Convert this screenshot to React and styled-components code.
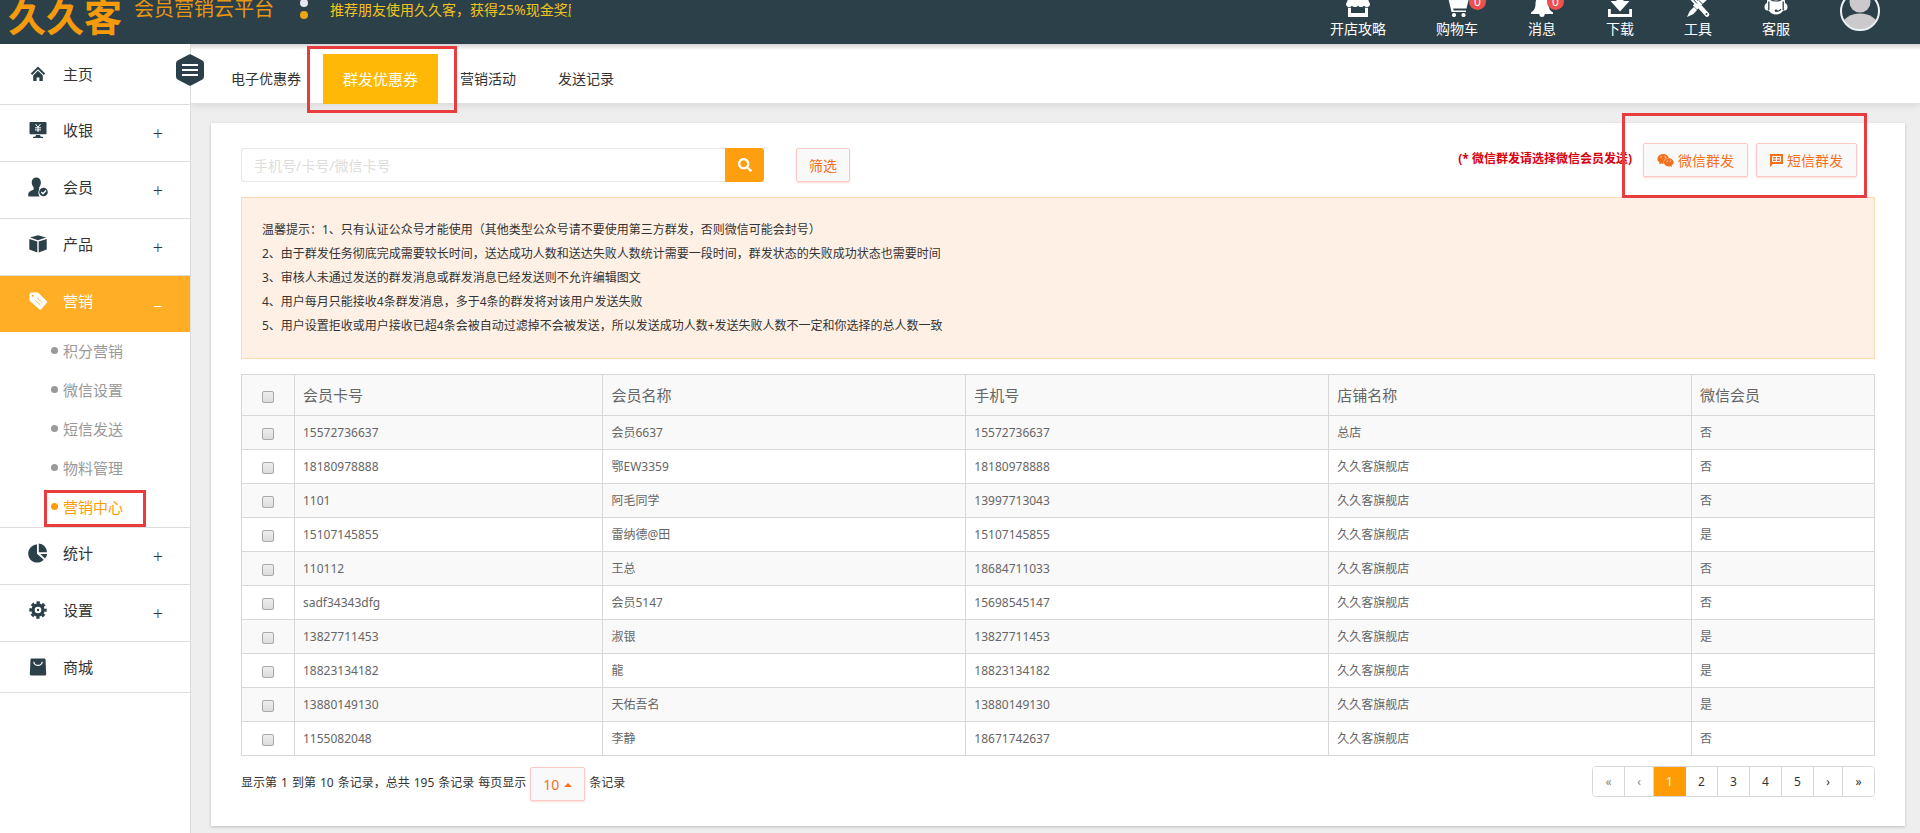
import React from "react";
import styled, { createGlobalStyle } from "styled-components";
import { FaSearch, FaWeixin } from "react-icons/fa";

const GlobalStyle = createGlobalStyle`
  * { box-sizing: border-box; }
  body {
    margin: 0;
    background: #eee;
    color: #333;
    font-family: "Noto Sans", "Noto Sans CJK SC", sans-serif;
    font-size: 12px;
    line-height: 20px;
  }
  button, input, select { font-family: inherit; }
  a { color: inherit; text-decoration: none; }
  ul { list-style: none; margin: 0; padding: 0; }
`;

const navy = "#2c404a";
const orange = "#ff9b05";
const marker = "#e83c3e";

/* ---------- header ---------- */

const Header = styled.header`
  position: relative;
  z-index: 1;
  display: flex;
  align-items: flex-end;
  height: 44px;
  padding-right: 40px;
  overflow: hidden;
  background: ${navy};
  color: #fff;
`;

const Logo = styled.a`
  width: 134px;
  padding-left: 8px;
  color: #f59b0b;
  font-size: 38px;
  font-weight: 700;
  line-height: 56px;
  white-space: nowrap;
`;

const Slogan = styled.div`
  width: 166px;
  height: 44px;
  color: #e8960f;
  font-size: 20px;
  line-height: 18px;
  white-space: nowrap;
`;

const PromoDots = styled.div`
  display: flex;
  flex-direction: column;
  gap: 4px;
  width: 30px;
  height: 45px;
`;

const PromoDot = styled.i`
  width: 8px;
  height: 8px;
  border-radius: 50%;
  background: ${(p) => (p.$active ? "#eda512" : "#e6e6f0")};
`;

const Promo = styled.a`
  width: 241px;
  height: 44px;
  overflow: hidden;
  color: #f0c320;
  font-size: 14px;
  white-space: nowrap;
`;

const Shortcuts = styled.nav`
  display: flex;
  align-items: flex-end;
  gap: 50px;
  margin-left: auto;
  padding-bottom: 5px;
`;

const Shortcut = styled.a`
  position: relative;
  display: flex;
  flex-direction: column;
  align-items: center;
  gap: 2px;
  font-size: 14px;
  white-space: nowrap;
`;

const Badge = styled.span`
  position: absolute;
  top: 0;
  right: -8px;
  width: 17px;
  height: 17px;
  border-radius: 50%;
  background: #ee4f4f;
  font-size: 12px;
  line-height: 17px;
  text-align: center;
`;

const Avatar = styled.a`
  display: block;
  height: 40px;
  margin-bottom: 8px;
`;

/* ---------- sidebar ---------- */

const Shell = styled.div`
  display: flex;
  min-height: calc(100vh - 44px);
`;

const Sidebar = styled.aside`
  position: relative;
  z-index: 2;
  flex: none;
  width: 191px;
  border-right: 1px solid #ddd;
  background: #fff;
`;

const Toggle = styled.button`
  position: absolute;
  top: 10px;
  right: -14px;
  width: 28px;
  height: 32px;
  padding: 0;
  border: 0;
  background: none;
`;

const MenuLink = styled.a`
  display: flex;
  align-items: center;
  height: ${(p) => p.$height || 57}px;
  padding: 0 26px ${(p) => (p.$centered ? 0 : 6)}px 28px;
  border-bottom: 1px solid ${(p) => (p.$active ? "#ffae26" : "#ddd")};
  background: ${(p) => (p.$active ? "#ffae26" : "#fff")};
  color: ${(p) => (p.$active ? "#fff" : "#333")};
  font-size: 15px;

  svg {
    margin-right: 15px;
    color: ${(p) => (p.$active ? "#fff" : navy)};
  }
`;

const Sign = styled.span`
  width: 12px;
  margin: 6px 0 0 auto;
  font-size: 18px;
  font-weight: 300;
  text-align: center;
`;

const SubMenu = styled.ul`
  border-bottom: 1px solid #ddd;
`;

const SubLink = styled.a`
  position: relative;
  display: flex;
  align-items: center;
  gap: 5px;
  height: 39px;
  padding: 0 0 2px 51px;
  color: ${(p) => (p.$active ? orange : "#999")};
  font-size: 15px;

  &::before {
    content: "";
    width: 7px;
    height: 7px;
    border-radius: 50%;
    background: currentColor;
  }
`;

const Marker = styled.span`
  position: absolute;
  inset: ${(p) => p.$inset};
  border: 3px solid ${marker};
  pointer-events: none;
`;

/* ---------- content ---------- */

const Content = styled.div`
  flex: 1;
  min-width: 0;
`;

const TabBar = styled.nav`
  display: flex;
  gap: 2px;
  height: 59px;
  padding: 10px 20px 0;
  background: linear-gradient(#d4d4d4, #fff 6px);
  box-shadow: 0 2px 8px rgba(0, 0, 0, 0.1);
`;

const Tab = styled.a`
  position: relative;
  height: 50px;
  padding: 0 20px;
  background: ${(p) => (p.$active ? "#ffb805" : "transparent")};
  color: ${(p) => (p.$active ? "#fff" : "#333")};
  font-size: ${(p) => (p.$active ? 15 : 14)}px;
  line-height: 50px;
  white-space: nowrap;
`;

const Card = styled.main`
  margin: 20px 15px 6px 20px;
  padding: 20px 30px 25px;
  background: #fff;
  box-shadow: 0 1px 3px rgba(0, 0, 0, 0.2);
`;

const Toolbar = styled.div`
  display: flex;
  justify-content: space-between;
  height: 39px;
  margin-bottom: 15px;
`;

const SearchForm = styled.form`
  display: flex;
  align-self: flex-end;
  height: 34px;
`;

const SearchInput = styled.input`
  width: 484px;
  padding: 0 12px;
  border: 1px solid #e8e8e8;
  border-right: 0;
  border-radius: 3px 0 0 3px;
  outline: 0;
  font-size: 14px;

  &::placeholder { color: #ddd; }
`;

const SearchButton = styled.button`
  display: flex;
  align-items: center;
  justify-content: center;
  width: 39px;
  margin-right: 32px;
  border: 0;
  border-radius: 0 3px 3px 0;
  background: #ff9f10;
  color: #fff;
`;

const Button = styled.button`
  display: flex;
  align-items: center;
  gap: 4px;
  height: 34px;
  padding: 0 ${(p) => (p.$wide ? 13 : 12)}px;
  border: 1px solid #fcc9c4;
  border-radius: 2px;
  background: #f9f9f9;
  box-shadow: 0 1px 2px rgba(240, 120, 100, 0.25);
  color: #f5701d;
  font-size: 14px;
  white-space: nowrap;
`;

const Actions = styled.div`
  display: flex;
  align-items: flex-start;
  padding-right: 18px;
`;

const Warning = styled.strong`
  margin-right: 11px;
  color: #d8000f;
  line-height: 32px;
`;

const ButtonGroup = styled.div`
  position: relative;
  display: flex;
  gap: 8px;
`;

const Tips = styled.div`
  margin-bottom: 15px;
  padding: 20px;
  border: 1px solid #fbd9b5;
  background: #fff0e5;
  line-height: 24px;

  p { margin: 0; }
`;

const Table = styled.table`
  width: 100%;
  table-layout: fixed;
  border-collapse: collapse;
  color: #666;
  text-align: left;

  th, td {
    height: 34px;
    padding: 0 8px;
    border: 1px solid #d8d8d8;
  }
  th {
    height: 41px;
    background: #f9f9f9;
    font-size: 15px;
    font-weight: 400;
  }
  tbody tr:nth-child(odd) { background: #f9f9f9; }
`;

const Col = styled.col`
  width: ${(p) => p.$width};
`;

const Check = styled.input.attrs({ type: "checkbox" })`
  appearance: none;
  display: block;
  width: 12px;
  height: 12px;
  margin: 3px auto 0;
  border: 1px solid #a9a9a9;
  border-radius: 2px;
  background: linear-gradient(#eee, #dcdcdc);
`;

const Footer = styled.footer`
  display: flex;
  align-items: flex-start;
  justify-content: space-between;
  margin-top: 10px;
`;

const Summary = styled.label`
  display: flex;
  gap: 4px;
  height: 35px;
  padding-top: 1px;
  line-height: 32px;
  white-space: nowrap;
`;

const SizePicker = styled.span`
  display: flex;
  position: relative;

  &::after {
    content: "";
    position: absolute;
    top: 16px;
    right: 13px;
    border: 4px solid transparent;
    border-top: 0;
    border-bottom-color: #f5701d;
    pointer-events: none;
  }
`;

const SizeSelect = styled.select`
  appearance: none;
  width: 55px;
  height: 34px;
  padding: 0 12px;
  border: 1px solid #fcc9c4;
  border-radius: 2px;
  background: #f9f9f9;
  box-shadow: 0 1px 2px rgba(240, 120, 100, 0.25);
  color: #f5701d;
  font-size: 14px;
`;

const Pager = styled.nav`
  display: flex;
  height: 31px;
  border: 1px solid #d8d8d8;
  border-radius: 4px;
  overflow: hidden;
`;

const PageLink = styled.a`
  width: ${(p) => (p.$narrow ? 29 : 32)}px;
  border-right: 1px solid ${(p) => (p.$active ? orange : "#d8d8d8")};
  background: ${(p) => (p.$active ? orange : "#fff")};
  color: ${(p) => (p.$active ? "#fff" : p.$muted ? "#888" : "#333")};
  line-height: 29px;
  text-align: center;

  &:last-child {
    width: 31px;
    border-right: 0;
  }
`;

/* ---------- icons ---------- */

const Icon = ({ size = 20, children }) => (
  <svg width={size} height={size} viewBox={`0 0 ${size} ${size}`} fill="currentColor" aria-hidden="true">
    {children}
  </svg>
);

const menuIcons = {
  home: (
    <Icon>
      <path d="M10 2.5 2.8 9.6l1.3 1.3L10 5.2l5.900 5.700 1.300-1.300z" />
      <path d="M10 6.800 5.200 11.500V17h3.400v-3.600h2.800V17h3.400v-5.500z" />
    </Icon>
  ),
  cashier: (
    <Icon>
      <path d="M2.500 2h15a1 1 0 0 1 1 1v10.200a1 1 0 0 1-1 1h-15a1 1 0 0 1-1-1V3a1 1 0 0 1 1-1zM8 15h4l.5 1.500 2.500.6v.9H5v-.9l2.500-.6z" />
      <path d="M7.500 4 10 7.300 12.500 4M10 7.300V12M7 7.800h6M7 9.900h6" fill="none" stroke="#fff" />
    </Icon>
  ),
  member: (
    <Icon>
      <path d="M8.300.5c-3 0-4.600 2-4.600 5 0 1.800.8 3.600 1.900 4.700v2.300C3.700 13.600.3 14.300.3 17.300v2.200h11.200a6 6 0 0 1-.5-5.500l.2-1.500v-2.300c1.100-1.100 1.700-2.900 1.700-4.700 0-3-1.700-5-4.600-5z" />
      <circle cx="15.500" cy="15" r="5" fill="#fff" />
      <circle cx="15.500" cy="15" r="4.300" />
      <path d="m13.300 15 1.700 1.700 3-3.200" fill="none" stroke="#fff" strokeWidth="1.400" />
    </Icon>
  ),
  product: (
    <Icon>
      <path d="M10 1.200 2 3.600l8 2.600 8-2.600zM1.300 4.900v10.700l8 3V7.600zM18.700 4.900v10.700l-8 3V7.600z" />
    </Icon>
  ),
  tag: (
    <Icon>
      <path d="M1.500 3a1.500 1.500 0 0 1 1.500-1.500h6.200a2 2 0 0 1 1.300.6l8.300 8.200a1 1 0 0 1 0 1.400L13 18.500a1 1 0 0 1-1.400 0L2.200 10.200A2 2 0 0 1 1.500 9z" />
      <circle cx="4.800" cy="4.800" r="1" fill="#ffae26" />
      <path d="m9 6.800 5.500 5M7 9.200l5.500 5" stroke="#ffc567" />
    </Icon>
  ),
  stats: (
    <Icon>
      <path d="M9 1.600a9 9 0 1 0 6.700 15.200L9 10.700z" />
      <path d="M10.800.5v8.800H19A9 9 0 0 0 10.800.5zM12.300 11h6.900a9 9 0 0 1-2.200 4.600z" />
    </Icon>
  ),
  settings: (
    <Icon>
      <g fill="none" stroke="currentColor">
        <circle cx="10" cy="10" r="5" strokeWidth="3.400" />
        <circle cx="10" cy="10" r="7.400" strokeWidth="2.600" strokeDasharray="3.300 2.510" strokeDashoffset="1.650" />
      </g>
      <circle cx="10" cy="10" r="1.200" />
    </Icon>
  ),
  mall: (
    <Icon>
      <path d="M3.500 1.500h13a1 1 0 0 1 1 1l.7 14.500a1.500 1.500 0 0 1-1.500 1.500H3.300A1.500 1.500 0 0 1 1.800 17l.7-14.500a1 1 0 0 1 1-1z" />
      <path d="M5.800 4.800c0 2 1.800 3.600 4.200 3.600s4.200-1.600 4.200-3.600" fill="none" stroke="#fff" strokeWidth="1.200" />
    </Icon>
  ),
};

const headerIcons = {
  shop: (
    <Icon size={24}>
      <path d="M3.500 3h17L24 11c0 1.800-1.300 3-3 3-1.200 0-2.300-.6-3-1.600-.6 1-1.700 1.600-3 1.600-1.200 0-2.400-.6-3-1.600-.6 1-1.800 1.600-3 1.600-1.300 0-2.400-.6-3-1.600-.7 1-1.800 1.600-3 1.600-1.700 0-3-1.200-3-3z" />
      <path d="M2 14.800h3V20h14v-5.200h3V24H2z" />
    </Icon>
  ),
  cart: (
    <Icon size={24}>
      <path d="M0 2h4l1.200 3H24l-2.500 10.500H8.200l.4 2H21V19H6.500L3 4H0z" />
      <circle cx="9" cy="22" r="2.100" />
      <circle cx="18.500" cy="22" r="2.100" />
    </Icon>
  ),
  bell: (
    <Icon size={24}>
      <path d="M12 1a2 2 0 0 0-2 2v.6C7 4.500 5.500 7 5.500 10.500c0 5.500-1.700 7-4.500 9V21h8.300a2.800 2.800 0 0 0 5.400 0H23v-1.500c-2.800-2-4.500-3.500-4.500-9C18.500 7 17 4.500 14 3.600V3a2 2 0 0 0-2-2z" />
      <circle cx="12" cy="21.500" r="2.500" />
    </Icon>
  ),
  download: (
    <Icon size={24}>
      <path d="M8.500 0h7v8h6L12 18.500 2.500 8h6zM0 16h2.800v5h18.400v-5H24v8H0z" />
    </Icon>
  ),
  tools: (
    <Icon size={24}>
      <path d="m3 2 18 19.500" stroke="currentColor" strokeWidth="4.500" strokeLinecap="round" />
      <path d="M20.500 3 9 14.500" stroke="currentColor" strokeWidth="6" />
      <path d="m8 14 3 3-3.500 4L1 24l2.800-6z" />
      <path d="m7.800 7 3.200 3.500M13 7.500l3.500 3.500" stroke={navy} strokeWidth="1" />
      <circle cx="20.500" cy="21" r="1" fill={navy} />
    </Icon>
  ),
  service: (
    <Icon size={24}>
      <path d="M12 0a9 9 0 0 0-9 9v1C1.500 10.500.5 12 .5 14s1 3.500 3 3.500h1.300a8.500 8.500 0 0 0 14.400 0h1.300c2 0 3-1.500 3-3.500s-1-3.500-2.500-4V9a9 9 0 0 0-9-9z" />
      <path d="M4.800 8.500v8.500M19.200 8.500v8.500" stroke={navy} strokeWidth="1.300" />
      <path d="M6.500 6.500C9 8.500 15 8.500 17.500 6.500" fill="none" stroke={navy} strokeWidth="1.200" />
      <path d="M12.500 18c2 .5 3.500-.3 4.500-1.800" fill="none" stroke={navy} strokeWidth="1.200" />
      <circle cx="12" cy="17.800" r="1.300" fill={navy} />
    </Icon>
  ),
};

const SmsIcon = () => (
  <Icon size={13}>
    <path d="M0 0h13v10H3L0 13z" />
    <path d="M2.500 2.500h8v5h-8zM2.500 5h8M6.500 2.500v5" stroke="#fff" fill="none" />
  </Icon>
);

/* ---------- data ---------- */

const shortcuts = [
  { label: "开店攻略", icon: "shop" },
  { label: "购物车", icon: "cart", count: 0 },
  { label: "消息", icon: "bell", count: 0 },
  { label: "下载", icon: "download" },
  { label: "工具", icon: "tools" },
  { label: "客服", icon: "service" },
];

const menu = [
  { label: "主页", icon: "home", height: 61, centered: true },
  { label: "收银", icon: "cashier", sign: "+" },
  { label: "会员", icon: "member", sign: "+" },
  { label: "产品", icon: "product", sign: "+" },
  {
    label: "营销",
    icon: "tag",
    sign: "–",
    height: 56,
    active: true,
    children: ["积分营销", "微信设置", "短信发送", "物料管理", "营销中心"],
  },
  { label: "统计", icon: "stats", sign: "+" },
  { label: "设置", icon: "settings", sign: "+" },
  { label: "商城", icon: "mall", height: 51, centered: true },
];

const tabs = ["电子优惠券", "群发优惠券", "营销活动", "发送记录"];

const tips = [
  "温馨提示：1、只有认证公众号才能使用（其他类型公众号请不要使用第三方群发，否则微信可能会封号）",
  "2、由于群发任务彻底完成需要较长时间，送达成功人数和送达失败人数统计需要一段时间，群发状态的失败成功状态也需要时间",
  "3、审核人未通过发送的群发消息或群发消息已经发送则不允许编辑图文",
  "4、用户每月只能接收4条群发消息，多于4条的群发将对该用户发送失败",
  "5、用户设置拒收或用户接收已超4条会被自动过滤掉不会被发送，所以发送成功人数+发送失败人数不一定和你选择的总人数一致",
];

const members = [
  ["15572736637", "会员6637", "15572736637", "总店", "否"],
  ["18180978888", "鄂EW3359", "18180978888", "久久客旗舰店", "否"],
  ["1101", "阿毛同学", "13997713043", "久久客旗舰店", "否"],
  ["15107145855", "雷纳德@田", "15107145855", "久久客旗舰店", "是"],
  ["110112", "王总", "18684711033", "久久客旗舰店", "否"],
  ["sadf34343dfg", "会员5147", "15698545147", "久久客旗舰店", "否"],
  ["13827711453", "淑银", "13827711453", "久久客旗舰店", "是"],
  ["18823134182", "龍", "18823134182", "久久客旗舰店", "是"],
  ["13880149130", "天佑吾名", "13880149130", "久久客旗舰店", "是"],
  ["1155082048", "李静", "18671742637", "久久客旗舰店", "否"],
];

const summary = ["显示第", "1", "到第", "10", "条记录，总共", "195", "条记录", "每页显示"];

const pages = [
  { text: "«", muted: true },
  { text: "‹", muted: true, narrow: true },
  { text: "1", active: true },
  { text: "2" },
  { text: "3" },
  { text: "4" },
  { text: "5" },
  { text: "›", narrow: true },
  { text: "»" },
];

export default function App() {
  return (
    <>
      <GlobalStyle />
      <Header>
        <Logo href="#">久久客</Logo>
        <Slogan>会员营销云平台</Slogan>
        <PromoDots>
          <PromoDot />
          <PromoDot $active />
        </PromoDots>
        <Promo href="#">推荐朋友使用久久客，获得25%现金奖励</Promo>
        <Shortcuts>
          {shortcuts.map((s) => (
            <Shortcut href="#" key={s.label}>
              {headerIcons[s.icon]}
              <span>{s.label}</span>
              {s.count !== undefined && <Badge>{s.count}</Badge>}
            </Shortcut>
          ))}
          <Avatar href="#" aria-label="account">
            <svg width="40" height="40" viewBox="0 0 40 40">
              <defs>
                <clipPath id="avatar">
                  <circle cx="20" cy="20" r="18.500" />
                </clipPath>
              </defs>
              <g clipPath="url(#avatar)" fill="#cbc9cb">
                <circle cx="20" cy="11" r="10.500" />
                <ellipse cx="20" cy="35" rx="18" ry="12.500" />
              </g>
              <circle cx="20" cy="20" r="19" fill="none" stroke="#eef3f5" strokeWidth="2" />
            </svg>
          </Avatar>
        </Shortcuts>
      </Header>

      <Shell>
        <Sidebar>
          <ul>
            {menu.map((m) => (
              <li key={m.label}>
                <MenuLink href="#" $height={m.height} $centered={m.centered} $active={m.active}>
                  {menuIcons[m.icon]}
                  {m.label}
                  {m.sign && <Sign>{m.sign}</Sign>}
                </MenuLink>
                {m.children && (
                  <SubMenu>
                    {m.children.map((c) => {
                      const current = c === "营销中心";
                      return (
                        <li key={c}>
                          <SubLink href="#" $active={current}>
                            {c}
                            {current && <Marker $inset="2px 44px 0 44px" />}
                          </SubLink>
                        </li>
                      );
                    })}
                  </SubMenu>
                )}
              </li>
            ))}
          </ul>
          <Toggle type="button" aria-label="menu">
            <svg width="28" height="32" viewBox="0 0 28 32">
              <path
                d="M12 .9a4 4 0 0 1 4 0l10 5.300a3.500 3.500 0 0 1 2 3.200v13.200a3.500 3.500 0 0 1-2 3.200l-10 5.300a4 4 0 0 1-4 0L2 25.800a3.500 3.500 0 0 1-2-3.200V9.400a3.500 3.500 0 0 1 2-3.200z"
                fill={navy}
              />
              <path d="M6 11h16M6 16h16M6 21h16" stroke="#fff" strokeWidth="2" />
            </svg>
          </Toggle>
        </Sidebar>

        <Content>
          <TabBar>
            {tabs.map((t, i) => (
              <Tab href="#" key={t} $active={i === 1}>
                {t}
                {i === 1 && <Marker $inset="-8px -19px -9px -16px" />}
              </Tab>
            ))}
          </TabBar>

          <Card>
            <Toolbar>
              <SearchForm onSubmit={(e) => e.preventDefault()}>
                <SearchInput aria-label="手机号/卡号/微信卡号" placeholder="手机号/卡号/微信卡号" />
                <SearchButton aria-label="search">
                  <FaSearch size={14} />
                </SearchButton>
                <Button type="button">筛选</Button>
              </SearchForm>
              <Actions>
                <Warning>(* 微信群发请选择微信会员发送)</Warning>
                <ButtonGroup>
                  <Button type="button" $wide>
                    <FaWeixin size={17} />
                    微信群发
                  </Button>
                  <Button type="button" $wide>
                    <SmsIcon />
                    短信群发
                  </Button>
                  <Marker $inset="-30px -10px -21px -21px" />
                </ButtonGroup>
              </Actions>
            </Toolbar>

            <Tips>
              {tips.map((t) => (
                <p key={t}>{t}</p>
              ))}
            </Tips>

            <Table>
              <colgroup>
                <Col $width="53px" />
                <Col $width="calc(100% * 17 / 90)" />
                <Col $width="calc(100% * 2 / 9)" />
                <Col $width="calc(100% * 2 / 9)" />
                <Col $width="calc(100% * 2 / 9)" />
                <Col />
              </colgroup>
              <thead>
                <tr>
                  <th>
                    <Check aria-label="全选" />
                  </th>
                  <th>会员卡号</th>
                  <th>会员名称</th>
                  <th>手机号</th>
                  <th>店铺名称</th>
                  <th>微信会员</th>
                </tr>
              </thead>
              <tbody>
                {members.map((row) => (
                  <tr key={row[0]}>
                    <td>
                      <Check aria-label={row[1]} />
                    </td>
                    {row.map((cell, i) => (
                      <td key={i}>{cell}</td>
                    ))}
                  </tr>
                ))}
              </tbody>
            </Table>

            <Footer>
              <Summary>
                {summary.map((s, i) => (
                  <span key={i}>{s}</span>
                ))}
                <SizePicker>
                  <SizeSelect defaultValue="10">
                    <option>10</option>
                    <option>25</option>
                    <option>50</option>
                  </SizeSelect>
                </SizePicker>
                <span>条记录</span>
              </Summary>
              <Pager>
                {pages.map((p) => (
                  <PageLink href="#" key={p.text} $active={p.active} $narrow={p.narrow} $muted={p.muted}>
                    {p.text}
                  </PageLink>
                ))}
              </Pager>
            </Footer>
          </Card>
        </Content>
      </Shell>
    </>
  );
}
